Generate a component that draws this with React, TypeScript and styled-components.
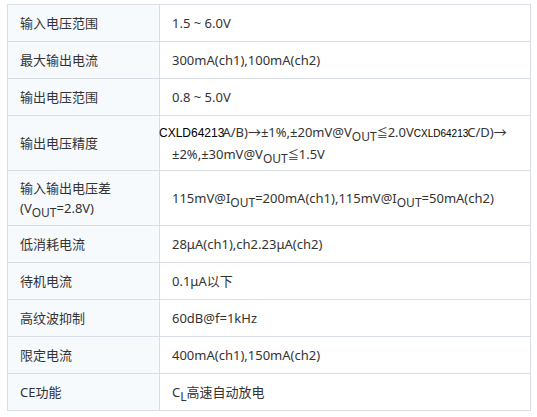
import React from "react";
import styled, { createGlobalStyle } from "styled-components";

const borderGrey = "#d9dee6";
const labelBlue = "#f7fafd";
const textGrey = "#333";

const GlobalStyle = createGlobalStyle`
  body {
    margin: 0;
    padding: 4px 6px 0 7px;
    background: #fff;
    font-family: "Noto Sans", "Noto Sans CJK SC", sans-serif;
    font-size: 13px;
    color: ${textGrey};
  }
`;

const SpecTable = styled.table`
  width: 524px;
  border-collapse: collapse;
  table-layout: fixed;
`;

const Cell = styled.td<{ $label?: boolean; $tall?: boolean }>`
  height: ${(p) => (p.$tall ? 54 : 36)}px;
  padding: 0 12px;
  border: 1px solid ${borderGrey};
  background: ${(p) => (p.$label ? labelBlue : "#fff")};
  line-height: 20px;
  vertical-align: middle;
  white-space: nowrap;
`;

const Sub = styled.span`
  font-size: 12px;
  line-height: 0;
  vertical-align: -4px;
`;

const LessEq = styled.span`
  font-size: 11px;
`;

const PartNo = styled.span<{ $size: number; $shift: number; $pull: number }>`
  font-family: "Liberation Sans", Arial, sans-serif;
  font-size: ${(p) => p.$size}px;
  color: #000;
  margin-left: ${(p) => p.$shift}px;
  margin-right: ${(p) => p.$pull}px;
`;

type Row = { label: React.ReactNode; value: React.ReactNode; tall?: boolean };

const rows: Row[] = [
  { label: "输入电压范围", value: "1.5 ~ 6.0V" },
  { label: "最大输出电流", value: "300mA(ch1),100mA(ch2)" },
  { label: "输出电压范围", value: "0.8 ~ 5.0V" },
  {
    label: "输出电压精度",
    tall: true,
    value: (
      <>
        <PartNo $size={12} $shift={-13} $pull={-2}>
          CXLD64213
        </PartNo>
        A/B)→±1%,±20mV@V<Sub>OUT</Sub>
        <LessEq>≦</LessEq>2.0V
        <PartNo $size={10} $shift={0} $pull={-1}>
          CXLD64213
        </PartNo>
        C/D)→
        <br />
        ±2%,±30mV@V<Sub>OUT</Sub>
        <LessEq>≦</LessEq>1.5V
      </>
    ),
  },
  {
    label: (
      <>
        输入输出电压差
        <br />
        (V<Sub>OUT</Sub>=2.8V)
      </>
    ),
    tall: true,
    value: (
      <>
        115mV@I<Sub>OUT</Sub>=200mA(ch1),115mV@I<Sub>OUT</Sub>=50mA(ch2)
      </>
    ),
  },
  { label: "低消耗电流", value: "28μA(ch1),ch2.23μA(ch2)" },
  { label: "待机电流", value: "0.1μA以下" },
  { label: "高纹波抑制", value: "60dB@f=1kHz" },
  { label: "限定电流", value: "400mA(ch1),150mA(ch2)" },
  {
    label: "CE功能",
    value: (
      <>
        C<Sub>L</Sub>高速自动放电
      </>
    ),
  },
];

const App = () => {
  return (
    <>
      <GlobalStyle />
      <SpecTable>
        <colgroup>
          <col style={{ width: 152 }} />
          <col />
        </colgroup>
        <tbody>
          {rows.map((row, i) => (
            <tr key={i}>
              <Cell $label $tall={row.tall}>
                {row.label}
              </Cell>
              <Cell $tall={row.tall}>{row.value}</Cell>
            </tr>
          ))}
        </tbody>
      </SpecTable>
    </>
  );
};

export default App;
